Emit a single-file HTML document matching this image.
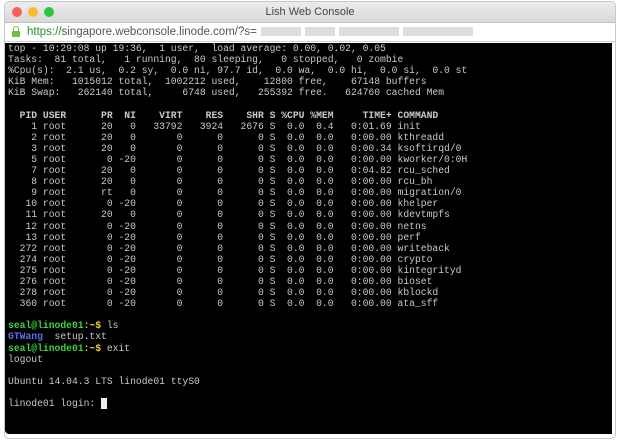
<!DOCTYPE html>
<html><head><meta charset="utf-8"><style>
html,body{margin:0;padding:0;width:618px;height:441px;background:#fff;overflow:hidden;font-family:"Liberation Sans",sans-serif}
.win{position:absolute;left:4px;top:1px;width:610px;height:436px;border:1px solid #c8c8c8;border-radius:5px;background:#fff;overflow:hidden}
.tb{height:20px;background:linear-gradient(#ececec,#d9d9d9);border-bottom:1px solid #c0c0c0;position:relative}
.tb .t{position:absolute;left:0;right:0;top:4px;text-align:center;font-size:11px;color:#444}
.dot{position:absolute;top:5px;width:10px;height:10px;border-radius:50%}
.addr{height:18px;background:#fff;border-bottom:1px solid #d0d0d0;position:relative;font-size:11.5px;line-height:18px;padding-left:22px;color:#555}
.addr .g{color:#2a8f2a}
.lock{position:absolute;left:7px;width:8px;height:6px;background:#6fbf4a;border-radius:1px;top:8px}
.lock:before{content:"";position:absolute;left:1px;top:-5px;width:4px;height:5px;border:1px solid #6fbf4a;border-bottom:none;border-radius:3px 3px 0 0}
.blur{display:inline-block;height:9px;background:#ddd;vertical-align:middle;margin-left:4px}
.term{position:absolute;left:0;top:41px;width:607px;height:391px;background:#000;border-radius:0 0 0 4px}
pre{margin:0;padding:0 0 0 3px;font-family:"Liberation Mono",monospace;font-size:9.7px;line-height:11.1px;color:#c9c9c9}
b{font-weight:bold}
.gr{color:#3bd53b;font-weight:bold}.ye{color:#e8d43a;font-weight:bold}.bl{color:#5b6cf0;font-weight:bold}
.cur{background:#eee;color:#eee}
</style></head><body>
<div class="win">
 <div class="tb"><span class="dot" style="left:7px;background:#fc5f57"></span><span class="dot" style="left:23px;background:#fdbb2e"></span><span class="dot" style="left:39px;background:#29c740"></span><div class="t">Lish Web Console</div></div>
 <div class="addr"><span class="lock"></span><span class="g">https://</span>singapore.webconsole.linode.com/?s=<span class="blur" style="width:40px"></span><span class="blur" style="width:30px"></span><span class="blur" style="width:60px"></span><span class="blur" style="width:70px"></span></div>
 <div class="term"><pre>top - 10:29:08 up 19:36,  1 user,  load average: 0.00, 0.02, 0.05
Tasks:  81 total,   1 running,  80 sleeping,   0 stopped,   0 zombie
%Cpu(s):  2.1 us,  0.2 sy,  0.0 ni, 97.7 id,  0.0 wa,  0.0 hi,  0.0 si,  0.0 st
KiB Mem:   1015012 total,  1002212 used,    12800 free,    67148 buffers
KiB Swap:   262140 total,     6748 used,   255392 free.   624760 cached Mem

<b>  PID USER      PR  NI    VIRT    RES    SHR S %CPU %MEM     TIME+ COMMAND</b>
    1 root      20   0   33792   3924   2676 S  0.0  0.4   0:01.69 init
    2 root      20   0       0      0      0 S  0.0  0.0   0:00.00 kthreadd
    3 root      20   0       0      0      0 S  0.0  0.0   0:00.34 ksoftirqd/0
    5 root       0 -20       0      0      0 S  0.0  0.0   0:00.00 kworker/0:0H
    7 root      20   0       0      0      0 S  0.0  0.0   0:04.82 rcu_sched
    8 root      20   0       0      0      0 S  0.0  0.0   0:00.00 rcu_bh
    9 root      rt   0       0      0      0 S  0.0  0.0   0:00.00 migration/0
   10 root       0 -20       0      0      0 S  0.0  0.0   0:00.00 khelper
   11 root      20   0       0      0      0 S  0.0  0.0   0:00.00 kdevtmpfs
   12 root       0 -20       0      0      0 S  0.0  0.0   0:00.00 netns
   13 root       0 -20       0      0      0 S  0.0  0.0   0:00.00 perf
  272 root       0 -20       0      0      0 S  0.0  0.0   0:00.00 writeback
  274 root       0 -20       0      0      0 S  0.0  0.0   0:00.00 crypto
  275 root       0 -20       0      0      0 S  0.0  0.0   0:00.00 kintegrityd
  276 root       0 -20       0      0      0 S  0.0  0.0   0:00.00 bioset
  278 root       0 -20       0      0      0 S  0.0  0.0   0:00.00 kblockd
  360 root       0 -20       0      0      0 S  0.0  0.0   0:00.00 ata_sff

<span class="gr">seal@linode01</span><span class="ye">:~$</span> ls
<span class="bl">GTWang</span>  setup.txt
<span class="gr">seal@linode01</span><span class="ye">:~$</span> exit
logout

Ubuntu 14.04.3 LTS linode01 ttyS0

linode01 login: <span class="cur">_</span></pre></div>
</div>
</body></html>
